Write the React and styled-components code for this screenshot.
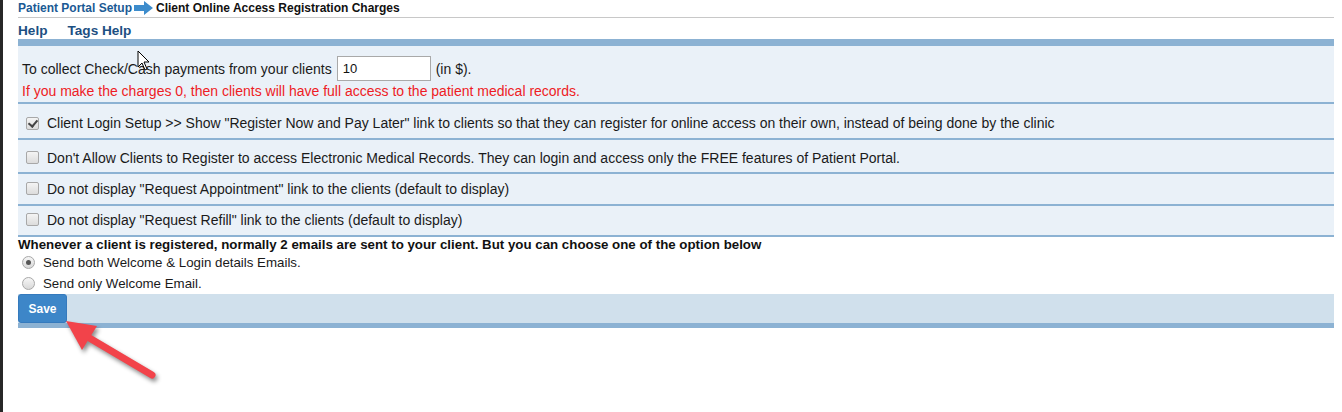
import React from 'react';
import styled, { createGlobalStyle } from 'styled-components';

const GlobalStyle = createGlobalStyle`
  body {
    margin: 0;
    background: #fff;
    font-family: "Liberation Sans", Arial, sans-serif;
    color: #1a1a1a;
  }
`;

const options = [
  {
    text: 'Client Login Setup >> Show "Register Now and Pay Later" link to clients so that they can register for online access on their own, instead of being done by the clinic',
    checked: true,
    h: 34,
    pt: 4,
    pb: 0,
  },
  {
    text: "Don't Allow Clients to Register to access Electronic Medical Records. They can login and access only the FREE features of Patient Portal.",
    checked: false,
    h: 32,
    pt: 3,
    pb: 0,
  },
  {
    text: 'Do not display "Request Appointment" link to the clients (default to display)',
    checked: false,
    h: 30,
    pt: 0,
    pb: 1,
  },
  {
    text: 'Do not display "Request Refill" link to the clients (default to display)',
    checked: false,
    h: 29,
    pt: 0,
    pb: 2,
  },
];

function ArrowIcon() {
  return (
    <svg width="20" height="14" viewBox="0 0 20 14">
      <polygon points="0,4 10,4 10,0 19,7 10,14 10,10 0,10" fill="#3d8ccc" />
    </svg>
  );
}

function App() {
  return (
    <Page>
      <GlobalStyle />
      <LeftEdge />
      <Main>
        <Breadcrumb>
          <Crumb>Patient Portal Setup</Crumb>
          <ArrowIcon />
          <Title>Client Online Access Registration Charges</Title>
        </Breadcrumb>
        <TopLinks>
          <TopLink>Help</TopLink>
          <TopLink>Tags Help</TopLink>
        </TopLinks>
        <Bar />
        <ChargePanel>
          <ChargeLine>
            To collect Check/Cash payments from your clients
            <AmountInput defaultValue="10" />
            (in $).
          </ChargeLine>
          <Warning>If you make the charges 0, then clients will have full access to the patient medical records.</Warning>
        </ChargePanel>
        {options.map((o, i) => (
          <OptionRow key={i} $h={o.h} $pt={o.pt} $pb={o.pb}>
            <Check type="checkbox" defaultChecked={o.checked} />
            <span>{o.text}</span>
          </OptionRow>
        ))}
        <EmailTitle>
          Whenever a client is registered, normally 2 emails are sent to your client. But you can choose one of the option below
        </EmailTitle>
        <RadioRow>
          <Radio type="radio" name="mail" defaultChecked />
          <span>Send both Welcome &amp; Login details Emails.</span>
        </RadioRow>
        <RadioRow>
          <Radio type="radio" name="mail" />
          <span>Send only Welcome Email.</span>
        </RadioRow>
        <SavePanel>
          <SaveButton>Save</SaveButton>
        </SavePanel>
      </Main>
      <Overlay width="1342" height="412" viewBox="0 0 1342 412">
        <g style={{ filter: 'drop-shadow(2px 3px 2px rgba(0,0,0,0.45))' }}>
          <line x1="86" y1="336" x2="152" y2="375" stroke="#f2434a" strokeWidth="7" strokeLinecap="round" />
          <polygon points="66,321 82,350 97,326" fill="#f2434a" />
        </g>
        <path
          d="M138 51 L138 67 L142 63 L145 70 L147 69 L144 62 L149 62 Z"
          fill="#fff"
          stroke="#000"
          strokeWidth="1"
          strokeLinejoin="round"
        />
      </Overlay>
    </Page>
  );
}

export default App;

const Page = styled.div`
  position: relative;
  display: flex;
  width: 1342px;
  height: 412px;
  overflow: hidden;
`;

const LeftEdge = styled.div`
  flex: none;
  width: 3px;
  background: #282828;
`;

const Main = styled.div`
  flex: none;
  margin-left: 15px;
  width: 1316px;
`;

const Breadcrumb = styled.div`
  display: flex;
  align-items: center;
  gap: 2px;
  height: 16px;
  padding-bottom: 1px;
  border-bottom: 1px solid #c8c8c8;
  font-size: 12px;
  font-weight: bold;
`;

const Crumb = styled.span`
  color: #1b5a94;
`;

const Title = styled.span`
  color: #111;
`;

const TopLinks = styled.div`
  display: flex;
  align-items: flex-end;
  gap: 20px;
  box-sizing: border-box;
  height: 21px;
  padding-bottom: 1px;
`;

const TopLink = styled.span`
  font-size: 13.6px;
  font-weight: bold;
  color: #1c4f82;
`;

const Bar = styled.div`
  height: 7px;
  background: #8cb2d3;
`;

const ChargePanel = styled.div`
  height: 58px;
  box-sizing: border-box;
  padding: 10px 4px 4px;
  background: #eaf1f8;
  border-bottom: 2px solid #8cb2d3;
  font-size: 14px;
`;

const ChargeLine = styled.div`
  display: flex;
  align-items: center;
  gap: 5px;
  height: 25px;
`;

const AmountInput = styled.input`
  box-sizing: border-box;
  width: 94px;
  height: 25px;
  margin: 0;
  padding: 0 5px;
  border: 1px solid #a9a9a9;
  background: #fff;
  font: 13px "Liberation Sans", Arial, sans-serif;
  color: #111;
`;

const Warning = styled.div`
  margin-top: 2px;
  line-height: 16px;
  color: #ee1c25;
`;

const OptionRow = styled.div`
  display: flex;
  align-items: center;
  gap: 8px;
  box-sizing: content-box;
  height: ${(p) => p.$h - p.$pt - p.$pb}px;
  padding: ${(p) => p.$pt}px 0 ${(p) => p.$pb}px 8px;
  background: #eaf1f8;
  border-bottom: 2px solid #8cb2d3;
  font-size: 14px;
  line-height: 16px;
`;

const Check = styled.input`
  appearance: none;
  flex: none;
  position: relative;
  width: 13px;
  height: 13px;
  margin: 0;
  border: 1px solid #a8a8a8;
  border-radius: 2px;
  background: linear-gradient(#f4f4f4, #dcdcdc);
  &:checked::after {
    content: '';
    position: absolute;
    left: 3px;
    top: 0px;
    width: 4px;
    height: 7px;
    border: solid #444;
    border-width: 0 2px 2px 0;
    transform: rotate(40deg);
  }
`;

const EmailTitle = styled.div`
  height: 15px;
  font-size: 13.3px;
  font-weight: bold;
  line-height: 15px;
  color: #111;
`;

const RadioRow = styled.div`
  display: flex;
  align-items: center;
  gap: 8px;
  height: 21px;
  padding-left: 4px;
  font-size: 13.3px;
`;

const Radio = styled.input`
  appearance: none;
  flex: none;
  position: relative;
  width: 13px;
  height: 13px;
  margin: 0;
  border: 1px solid #a8a8a8;
  border-radius: 50%;
  background: linear-gradient(#f6f6f6, #d8d8d8);
  &:checked::after {
    content: '';
    position: absolute;
    left: 3px;
    top: 3px;
    width: 5px;
    height: 5px;
    border-radius: 50%;
    background: #555;
  }
`;

const SavePanel = styled.div`
  height: 29px;
  background: #d0e0ec;
  border-bottom: 5px solid #8cb2d3;
`;

const SaveButton = styled.button`
  width: 49px;
  height: 29px;
  margin: 0;
  padding: 0;
  border: 1px solid #357abd;
  border-radius: 3px;
  background: #3d86c8;
  color: #fff;
  font: bold 12px "Liberation Sans", Arial, sans-serif;
`;

const Overlay = styled.svg`
  position: absolute;
  left: 0;
  top: 0;
  pointer-events: none;
`;
